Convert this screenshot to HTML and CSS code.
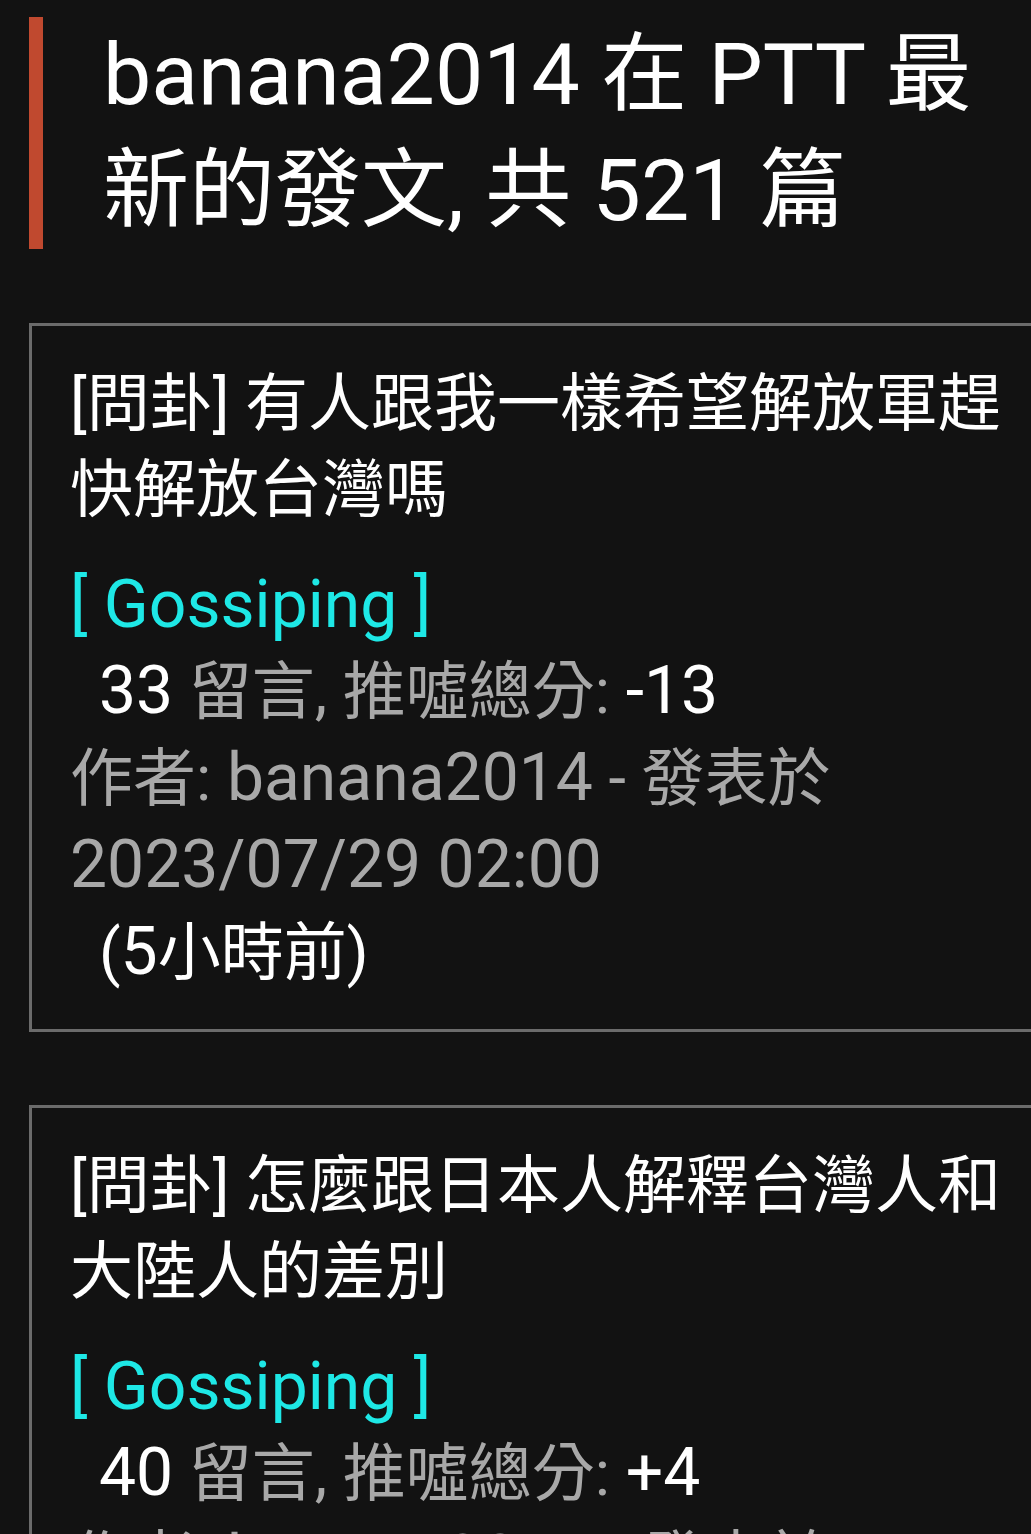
FILE: index.html
```html
<!DOCTYPE html>
<html lang="zh-Hant">
<head>
<meta charset="utf-8">
<link rel="stylesheet" href="styles.css">
</head>
<body>
<main class="page">
  <h1 class="heading">banana2014 在 PTT 最新的發文, 共 521 篇</h1>

  <article class="card">
    <div class="title">[問卦] 有人跟我一樣希望解放軍趕快解放台灣嗎</div>
    <div class="board">[ Gossiping ]</div>
    <div class="stats"><span class="hi lat">33</span> 留言, 推噓總分: <span class="hi lat">-13</span></div>
    <div class="meta">作者: <span class="lat">banana2014</span> - 發表於 <span class="lat">2023/07/29 02:00</span></div>
    <div class="ago">(<span class="lat">5</span>小時前)</div>
  </article>

  <article class="card">
    <div class="title">[問卦] 怎麼跟日本人解釋台灣人和大陸人的差別</div>
    <div class="board">[ Gossiping ]</div>
    <div class="stats"><span class="hi lat">40</span> 留言, 推噓總分: <span class="hi lat">+4</span></div>
    <div class="meta">作者: <span class="lat">banana2014</span> - 發表於 <span class="lat">2023/07/29 01:00</span></div>
    <div class="ago">(<span class="lat">6</span>小時前)</div>
  </article>
</main>
</body>
</html>
```

FILE: styles.css
```css
html, body {
  margin: 0;
  padding: 0;
  background: #121212;
  overflow: hidden;
}

body {
  width: 1031px;
  height: 1534px;
  font-family: Roboto, "Noto Sans CJK TC", sans-serif;
  color: #ffffff;
}

.page {
  display: flex;
  flex-direction: column;
  padding-top: 17px;
}

.heading {
  margin: 0 0 74px 29px;
  border-left: 14px solid #c0492f;
  padding-left: 60px;
  font-size: 86px;
  font-weight: 400;
  line-height: 116px;
  width: 890px;
}

.card {
  margin: 0 0 73px 29px;
  width: 1040px;
  border: 3px solid #6b6b6b;
  padding: 35px 0 33px 38px;
  font-size: 63px;
  line-height: 86px;
  box-sizing: border-box;
}

.title {
  width: 950px;
  margin-bottom: 29px;
}

.board {
  color: #1ee8e6;
  font-size: 66px;
}

.stats, .meta {
  color: #a8a8a8;
}

.stats, .ago {
  padding-left: 29px;
}

.meta {
  width: 790px;
}

.lat {
  font-size: 66px;
}

.hi {
  color: #ffffff;
}

.ago {
  color: #ffffff;
}
```
